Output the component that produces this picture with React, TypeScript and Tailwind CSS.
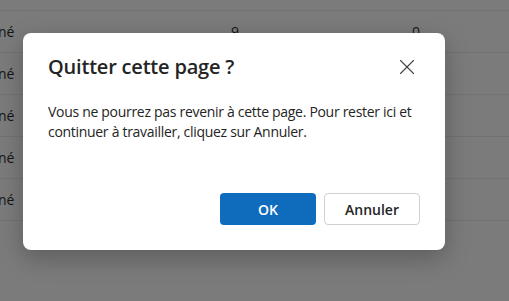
import React from 'react';
import { X } from 'lucide-react';

const rows = ['né', 'né', 'né', 'né', 'né'];

const App: React.FC = () => {
  return (
    <div className="relative w-[509px] h-[301px] overflow-hidden bg-[#7b7b7b] font-['Segoe_UI','Open_Sans',sans-serif]">
      {/* Table behind the overlay */}
      <div className="pt-[10px]">
        {rows.map((r, i) => (
          <div key={i} className="flex items-center h-[42px] border-t border-[#727272] text-[14px] text-[#151515]">
            <span className="w-[233px] -ml-[2px]">{r}</span>
            <span className="w-[181px]">{i === 0 ? '9' : ''}</span>
            <span>{i === 0 ? '0' : ''}</span>
          </div>
        ))}
        <div className="border-t border-[#727272]" />
      </div>

      {/* Dialog */}
      <div className="absolute left-[23px] top-[33px] w-[422px] h-[217px] bg-white rounded-[8px] shadow-[0_8px_24px_rgba(0,0,0,0.25)] px-[25px] pt-[20px] pb-[25px] flex flex-col">
        <div className="flex items-start justify-between">
          <h2 className="text-[20px] leading-[28px] font-semibold text-[#242424] tracking-[-0.2px]">Quitter cette page ?</h2>
          <button className="mt-[1px] w-[26px] h-[26px] flex items-center justify-center text-[#424242]">
            <X size={26} strokeWidth={1} />
          </button>
        </div>
        <p className="mt-[21px] text-[14px] leading-[20px] text-[#242424] tracking-[-0.3px]">
          Vous ne pourrez pas revenir à cette page. Pour rester ici et continuer à travailler, cliquez sur Annuler.
        </p>
        <div className="mt-auto flex justify-end gap-[8px]">
          <button className="w-[96px] h-[32px] rounded-[4px] bg-[#0f6cbd] text-white text-[14px] font-semibold">OK</button>
          <button className="w-[96px] h-[32px] rounded-[4px] border border-[#d1d1d1] bg-white text-[#242424] text-[14px] font-semibold">Annuler</button>
        </div>
      </div>
    </div>
  );
};

export default App;
